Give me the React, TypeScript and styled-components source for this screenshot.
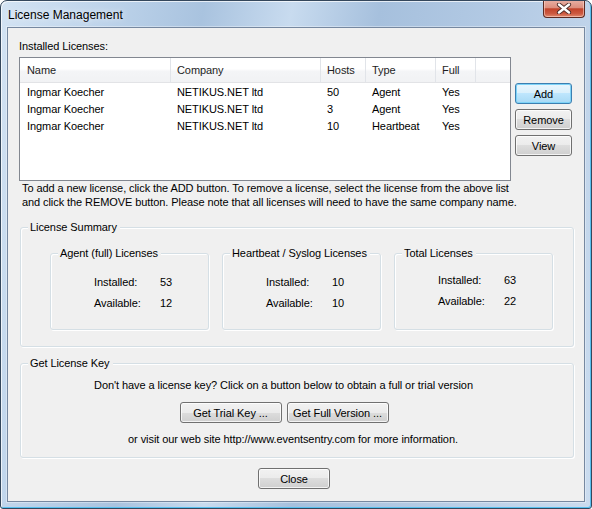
import React from "react"
import styled, { createGlobalStyle } from "styled-components"

const GlobalStyle = createGlobalStyle`
  html, body {
    margin: 0;
    padding: 0;
    background: #ffffff;
  }
  * {
    box-sizing: border-box;
  }
`

const licenses = [
  { name: "Ingmar Koecher", company: "NETIKUS.NET ltd", hosts: "50", type: "Agent", full: "Yes" },
  { name: "Ingmar Koecher", company: "NETIKUS.NET ltd", hosts: "3", type: "Agent", full: "Yes" },
  { name: "Ingmar Koecher", company: "NETIKUS.NET ltd", hosts: "10", type: "Heartbeat", full: "Yes" }
]

const summary = [
  { title: "Agent (full) Licenses", installed: "53", available: "12", shift: 0 },
  { title: "Heartbeat / Syslog Licenses", installed: "10", available: "10", shift: 0 },
  { title: "Total Licenses", installed: "63", available: "22", shift: -2 }
]

const App: React.FC = () => (
  <>
    <GlobalStyle />
    <Window>
      <TitleBar>
        <TitleText>License Management</TitleText>
        <CloseBox aria-label="Close">
          <svg width="16" height="11" viewBox="0 0 16 11">
            <path d="M3 1.5 L13 9.5 M13 1.5 L3 9.5" stroke="#4b2a26" strokeWidth="4.2" strokeLinecap="round" />
            <path d="M3 1.5 L13 9.5 M13 1.5 L3 9.5" stroke="#ffffff" strokeWidth="2.4" strokeLinecap="round" />
          </svg>
        </CloseBox>
      </TitleBar>
      <Client>
        <SectionLabel>Installed Licenses:</SectionLabel>
        <ListRow>
          <ListBox>
            <ListHeader>
              <HeaderCell $first>Name</HeaderCell>
              <HeaderCell>Company</HeaderCell>
              <HeaderCell>Hosts</HeaderCell>
              <HeaderCell>Type</HeaderCell>
              <HeaderCell>Full</HeaderCell>
              <HeaderCell $last />
            </ListHeader>
            <ListBody>
              {licenses.map((l, i) => (
                <ListItem key={i}>
                  <Cell $first>{l.name}</Cell>
                  <Cell>{l.company}</Cell>
                  <Cell>{l.hosts}</Cell>
                  <Cell>{l.type}</Cell>
                  <Cell>{l.full}</Cell>
                </ListItem>
              ))}
            </ListBody>
          </ListBox>
          <SideButtons>
            <Button $default $width={57}>Add</Button>
            <Button $width={57}>Remove</Button>
            <Button $width={57}>View</Button>
          </SideButtons>
        </ListRow>
        <HelpText>
          To add a new license, click the ADD button. To remove a license, select the license from the above list
          <br />
          and click the REMOVE button. Please note that all licenses will need to have the same company name.
        </HelpText>

        <GroupBox $height={120} $mt={18}>
          <Legend>License Summary</Legend>
          <SummaryRow>
            {summary.map((s) => (
              <GroupBox key={s.title} $height={77} $width={159}>
                <Legend>{s.title}</Legend>
                <StatGrid $shift={s.shift}>
                  <StatLabel>Installed:</StatLabel>
                  <StatValue>{s.installed}</StatValue>
                  <StatLabel>Available:</StatLabel>
                  <StatValue>{s.available}</StatValue>
                </StatGrid>
              </GroupBox>
            ))}
          </SummaryRow>
        </GroupBox>

        <GroupBox $height={95} $mt={16}>
          <Legend>Get License Key</Legend>
          <KeyContent>
            <CenterLine $offset={27}>
              Don't have a license key? Click on a button below to obtain a full or trial version
            </CenterLine>
            <KeyButtons>
              <Button $width={102}>Get Trial Key ...</Button>
              <Button $width={102}>Get Full Version ...</Button>
            </KeyButtons>
            <CenterLine $offset={8}>
              or visit our web site http://www.eventsentry.com for more information.
            </CenterLine>
          </KeyContent>
        </GroupBox>

        <Footer>
          <Button $width={72}>Close</Button>
        </Footer>
      </Client>
    </Window>
  </>
)

const Window = styled.div`
  width: 592px;
  height: 509px;
  border: 1px solid #34475c;
  border-radius: 7px 7px 3px 3px;
  padding: 0 6px 6px;
  display: flex;
  flex-direction: column;
  background: linear-gradient(
    100deg,
    #d3e3f3 0%,
    #bdd3ea 16%,
    #a9c3df 30%,
    #c8dbef 43%,
    #a6c0dd 56%,
    #b3cae4 74%,
    #cbdcef 100%
  );
  box-shadow: inset 1px 1px 0 rgba(255, 255, 255, 0.7), inset -1px -1px 0 #58c0ef;
  font-family: "Liberation Sans", Arial, sans-serif;
  font-size: 11px;
  letter-spacing: -0.08px;
  color: #000;
  overflow: hidden;
`

const TitleBar = styled.div`
  height: 26px;
  display: flex;
  justify-content: space-between;
  align-items: flex-start;
  padding-left: 1px;
`

const TitleText = styled.div`
  font-family: "Liberation Sans", Arial, sans-serif;
  font-size: 12px;
  letter-spacing: 0;
  line-height: 15px;
  padding-top: 7px;
  color: #000;
  text-shadow: 0 0 6px rgba(255, 255, 255, 0.9);
`

const CloseBox = styled.div`
  width: 42px;
  height: 18px;
  margin-top: -1px;
  border: 1px solid #5c2a22;
  border-top: none;
  border-radius: 0 0 4px 4px;
  display: flex;
  align-items: center;
  justify-content: center;
  background: linear-gradient(
    180deg,
    #e9b1a5 0%,
    #dc8e7e 45%,
    #c2432b 52%,
    #cc5a41 80%,
    #e08a6f 100%
  );
  box-shadow: inset 0 0 0 1px rgba(255, 220, 210, 0.55);
`

const Client = styled.div`
  flex: 1;
  border: 1px solid #7688a0;
  background: #f0f0f0;
  padding: 12px 0 12px 11px;
  display: flex;
  flex-direction: column;
  box-shadow: 0 0 0 1px rgba(255, 255, 255, 0.35);
`

const SectionLabel = styled.div`
  line-height: 13px;
  height: 13px;
  margin-bottom: 4px;
`

const ListRow = styled.div`
  display: flex;
  align-items: flex-start;
`

const ListBox = styled.div`
  width: 492px;
  height: 124px;
  border: 1px solid #828790;
  background: #ffffff;
`

const columns = "151px 150px 45px 70px 40px 1fr"

const ListHeader = styled.div`
  display: grid;
  grid-template-columns: ${columns};
  height: 25px;
  border-bottom: 1px solid #e2e3e6;
  background: linear-gradient(180deg, #ffffff 0%, #ffffff 45%, #f4f5f7 55%, #f1f2f4 100%);
`

const HeaderCell = styled.div<{ $first?: boolean; $last?: boolean }>`
  padding-left: ${(p) => (p.$first ? 7 : 6)}px;
  line-height: 24px;
  border-right: ${(p) => (p.$last ? "none" : "1px solid #e1e4e9")};
  white-space: nowrap;
  color: #1e1e1e;
`

const ListBody = styled.div`
  padding-top: 1px;
`

const ListItem = styled.div`
  display: grid;
  grid-template-columns: ${columns};
  height: 17px;
  line-height: 17px;
`

const Cell = styled.div<{ $first?: boolean }>`
  padding-left: ${(p) => (p.$first ? 7 : 6)}px;
  white-space: nowrap;
`

const SideButtons = styled.div`
  display: flex;
  flex-direction: column;
  gap: 5px;
  margin-left: 4px;
  padding-top: 26px;
`

const Button = styled.div<{ $default?: boolean; $width: number }>`
  width: ${(p) => p.$width}px;
  height: 21px;
  border: 1px solid ${(p) => (p.$default ? "#3c7fb1" : "#707070")};
  border-radius: 3px;
  display: flex;
  align-items: center;
  justify-content: center;
  white-space: nowrap;
  background: ${(p) =>
    p.$default
      ? "linear-gradient(180deg, #eaf6fd 0%, #d9f0fc 50%, #bee6fd 50%, #a7d9f5 100%)"
      : "linear-gradient(180deg, #f2f2f2 0%, #ebebeb 50%, #dddddd 50%, #cfcfcf 100%)"};
  box-shadow: ${(p) =>
    p.$default ? "inset 0 0 0 1px #7ed3f7" : "inset 0 0 0 1px rgba(255, 255, 255, 0.75)"};
`

const HelpText = styled.div`
  padding-left: 3px;
  line-height: 14px;
  white-space: nowrap;
`

const GroupBox = styled.div<{ $height: number; $width?: number; $mt?: number }>`
  position: relative;
  width: ${(p) => (p.$width ? `${p.$width}px` : "554px")};
  height: ${(p) => p.$height}px;
  margin-top: ${(p) => p.$mt ?? 0}px;
  margin-left: ${(p) => (p.$width ? 0 : 1)}px;
  flex-shrink: 0;
  border: 1px solid #d5dfe5;
  border-radius: 3px;
  box-shadow: inset 1px 1px 0 #ffffff, 1px 1px 0 #ffffff;
`

const Legend = styled.div`
  position: absolute;
  top: -7px;
  left: 7px;
  padding: 0 3px 0 2px;
  line-height: 13px;
  background: #f0f0f0;
  white-space: nowrap;
`

const SummaryRow = styled.div`
  display: flex;
  gap: 13px;
  padding: 25px 0 0 29px;
`

const StatGrid = styled.div<{ $shift: number }>`
  display: grid;
  grid-template-columns: 66px auto;
  row-gap: 8px;
  line-height: 13px;
  padding: ${(p) => 22 + p.$shift}px 0 0 43px;
`

const StatLabel = styled.div``

const StatValue = styled.div``

const KeyContent = styled.div`
  display: flex;
  flex-direction: column;
  align-items: stretch;
  padding-top: 15px;
`

const CenterLine = styled.div<{ $offset: number }>`
  text-align: center;
  line-height: 13px;
  white-space: nowrap;
  padding-right: ${(p) => p.$offset}px;
`

const KeyButtons = styled.div`
  display: flex;
  justify-content: center;
  gap: 5px;
  padding-right: 26px;
  margin: 10px 0 10px;
`

const Footer = styled.div`
  display: flex;
  justify-content: center;
  margin-top: 10px;
  padding-right: 15px;
`

export default App
